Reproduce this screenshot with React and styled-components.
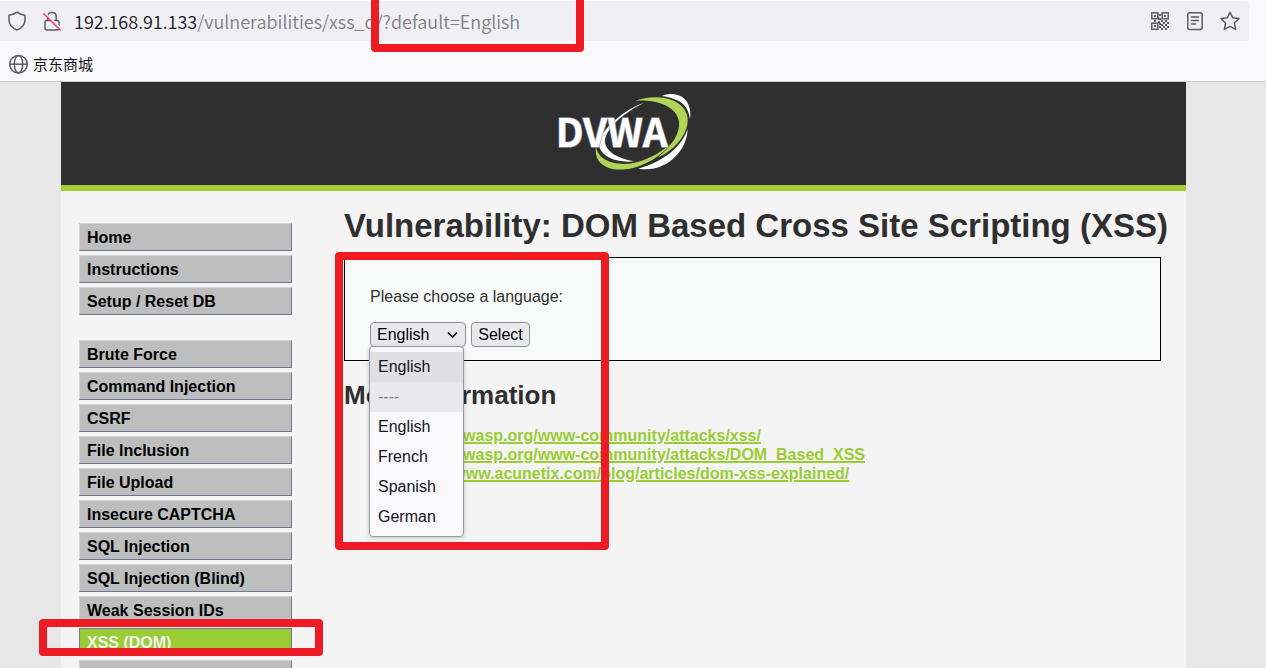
import React from "react";
import styled, { createGlobalStyle, css } from "styled-components";

const sans = `"Liberation Sans", Arial, Helvetica, sans-serif`;
const uiFont = `"Noto Sans CJK SC", "Noto Sans", sans-serif`;

const GlobalStyle = createGlobalStyle`
  *, *::before, *::after { box-sizing: border-box; }
  body { margin: 0; background: #e7e7e7; font-family: ${sans}; font-size: 16px; }
`;

const Window = styled.div`
  position: relative;
  display: flex;
  flex-direction: column;
  height: 100vh;
  overflow: hidden;
`;

const Chrome = styled.header`
  flex: none;
  background: #f9f9fb;
  border-bottom: 1px solid #cccccc;
  padding-top: 1px;
  font-family: ${uiFont};
`;

const UrlBar = styled.div`
  display: flex;
  align-items: center;
  height: 40px;
  margin-right: 17px;
  padding: 0 9px 0 7px;
  background: #f0eff4;
  border-radius: 0 4px 4px 0;
  color: #5b5b66;
`;

const IconButton = styled.button`
  display: flex;
  flex: none;
  width: 20px;
  height: 20px;
  margin-right: ${(p) => p.$after || 0}px;
  padding: 0;
  border: 0;
  background: none;
  color: inherit;
`;

const Address = styled.div`
  flex: 1;
  font-size: 18px;
  font-weight: 350;
  line-height: 24px;
  color: #7f7f85;
  white-space: nowrap;
`;

const Host = styled.span`
  color: #15141a;
`;

const Bookmarks = styled.nav`
  display: flex;
  align-items: center;
  height: 40px;
  padding: 5px 8px 0;
`;

const Bookmark = styled.a`
  display: flex;
  align-items: center;
  gap: 4px;
  color: #15141a;
  font-size: 15px;
  line-height: 20px;
  text-decoration: none;
`;

const Viewport = styled.div`
  flex: 1;
  min-height: 0;
  overflow: hidden;
  padding: 0 80px 0 61px;
`;

const Container = styled.div`
  min-height: 100%;
  background: #f4f4f4;
`;

const Banner = styled.div`
  display: flex;
  justify-content: center;
  height: 109px;
  padding-top: 12px;
  background: #2f2f2f;
  border-bottom: 6px solid #a1cc33;
`;

const Columns = styled.div`
  display: flex;
  align-items: flex-start;
`;

const Menu = styled.nav`
  flex: none;
  width: 231px;
  padding: 32px 0 0 18px;
`;

const MenuGroup = styled.ul`
  display: flex;
  flex-direction: column;
  gap: 4px;
  margin: 0 0 25px;
  padding: 0;
  list-style: none;
`;

const MenuLink = styled.a`
  display: block;
  height: 28px;
  padding: 0 7px;
  border: 1px solid;
  border-color: #d2d2d2 #6f7a92 #6f7a92 #d2d2d2;
  background: #bebebe;
  color: #000;
  font-weight: bold;
  line-height: 27px;
  text-decoration: none;
  white-space: nowrap;
  ${(p) =>
    p.$active &&
    css`
      border-color: #6f7a92;
      background: #9acc33;
      color: #f4f4f4;
    `}
`;

const Main = styled.main`
  flex: 1;
  min-width: 0;
  padding: 14px 25px 0 52px;
  color: #2f2f2f;
`;

const Title = styled.h1`
  margin: 0 0 10px;
  font-size: 33px;
  line-height: 42px;
  white-space: nowrap;
`;

const Panel = styled.form`
  height: 104px;
  padding: 29px 25px 0;
  border: 1px solid #000;
  background: #f8faf9;
`;

const FieldLabel = styled.label`
  display: block;
  margin-bottom: 16px;
  line-height: 19px;
`;

const Controls = styled.div`
  display: flex;
  gap: 5px;
`;

const SelectWrap = styled.div`
  position: relative;
  width: 96px;
  height: 25px;
`;

const control = css`
  height: 25px;
  border: 1px solid #8f8f9d;
  border-radius: 4px;
  background: #e9e9ed;
  color: #000;
  font-family: ${sans};
  font-size: 16px;
  line-height: 22px;
`;

const LanguageSelect = styled.select`
  ${control}
  appearance: none;
  width: 100%;
  padding: 0 6px;
`;

const Chevron = styled.svg`
  position: absolute;
  top: 9px;
  right: 8px;
  pointer-events: none;
`;

const SubmitButton = styled.button`
  ${control}
  width: 59px;
  padding: 0;
`;

const Options = styled.ul`
  position: absolute;
  z-index: 1;
  top: 24px;
  left: -1px;
  width: 95px;
  height: 191px;
  margin: 0;
  padding: 5px 0 0;
  border: 1px solid #9a9a9e;
  border-radius: 4px;
  background: #f9f9fb;
  box-shadow: 0 1px 4px rgba(0, 0, 0, 0.2);
  list-style: none;
`;

const Option = styled.li`
  height: 30px;
  padding: 0 8px;
  background: ${(p) => p.$bg || "transparent"};
  color: ${(p) => (p.$muted ? "#7a7a82" : "#15141a")};
  line-height: 30px;
`;

const Subtitle = styled.h2`
  margin: 19px 0 16px;
  font-size: 26px;
  line-height: 30px;
`;

const References = styled.ul`
  margin: 0;
  padding-left: 56px;
  line-height: 19px;
`;

const Reference = styled.a`
  color: #9acc33;
  font-weight: bold;
  text-decoration-thickness: 2px;
`;

const Highlight = styled.div`
  position: absolute;
  z-index: 2;
  top: ${(p) => p.$y}px;
  left: ${(p) => p.$x}px;
  width: ${(p) => p.$w}px;
  height: ${(p) => p.$h}px;
  border: 8px solid #ed1c24;
  border-radius: 4px;
  pointer-events: none;
`;

const line = {
  fill: "none",
  stroke: "currentColor",
  strokeWidth: 1.5,
  strokeLinecap: "round",
  strokeLinejoin: "round",
};

const ShieldIcon = () => (
  <svg width="20" height="20" viewBox="0 0 20 20" {...line}>
    <path d="M10 1.2 C12 2.8 15 3.8 18 4.2 V8.5 C18 13 15 17 10 19 C5 17 2 13 2 8.5 V4.2 C5 3.8 8 2.8 10 1.2 Z" />
  </svg>
);

const InsecureIcon = () => (
  <svg width="20" height="20" viewBox="0 0 20 20" {...line}>
    <path d="M5.8 9 V5.5 C5.8 0 14.2 0 14.2 5.5 V9 M5 9.5 H15 C16.3 9.5 17 10.2 17 11.5 V17 C17 18.3 16.3 19 15 19 H5 C3.7 19 3 18.3 3 17 V11.5 C3 10.2 3.7 9.5 5 9.5 Z" />
    <path d="M3 2.2 L19.5 18.2" stroke="#f0eff4" strokeWidth="2" />
    <path d="M1.8 2.8 L18.2 19" stroke="#ff3b63" />
  </svg>
);

const QrIcon = () => (
  <svg width="20" height="20" viewBox="0 0 20 20" fill="none" stroke="currentColor" strokeWidth="1.5">
    <path d="M1.8 1.8 h6 v6 h-6 Z M12.2 1.8 h6 v6 h-6 Z M1.8 12.2 h6 v6 h-6 Z" />
    <path
      fill="currentColor"
      stroke="none"
      d="M4 4h2v2H4z M14 4h2v2h-2z M4 14h2v2H4z M9 3h2v2H9z M8 5h1v2h2v2H8z M4 9h2v2H4z M8 10h2v2H8z M11 9h2v2h-2z M15 9h2v2h-2z M9 12h2v2H9z M13 11h2v2h-2z M17 11h2v2h-2z M11 13h2v2h-2z M15 13h2v2h-2z M9 15h2v2H9z M13 15h2v2h-2z M17 15h2v2h-2z M11 17h2v2h-2z M15 17h2v2h-2z"
    />
  </svg>
);

const ReaderIcon = () => (
  <svg width="20" height="20" viewBox="0 0 20 20" {...line}>
    <rect x="2.8" y="1.8" width="14.4" height="16.6" rx="2" />
    <path d="M6.5 6 H13.5 M6.5 9.5 H13.5 M6.5 13 H10.5" />
  </svg>
);

const StarIcon = () => (
  <svg width="20" height="20" viewBox="0 0 20 20" {...line}>
    <path d="M10 1.2 L12.6 6.8 L19 7.6 L14.4 12 L15.6 18.4 L10 15.3 L4.4 18.4 L5.6 12 L1 7.6 L7.4 6.8 Z" />
  </svg>
);

const GlobeIcon = () => (
  <svg width="21" height="21" viewBox="0 0 21 21" fill="none" stroke="#5b5b66" strokeWidth="1.5">
    <circle cx="10.5" cy="11.2" r="8.8" />
    <ellipse cx="10.5" cy="11.2" rx="4.2" ry="8.8" />
    <path d="M1.8 11.2 H19.2" />
  </svg>
);

const Logo = () => (
  <svg width="134" height="76" viewBox="48 30 402 228" role="img" aria-label="DVWA">
    <path fill="#fff" d="M308 57 C240 80 165 150 175 190 C185 220 230 238 280 232 C235 225 195 205 192 175 C190 140 240 90 308 57 Z" />
    <path fill="#fff" d="M362 36 C405 18 456 40 447 105 C442 66 420 44 362 36 Z" />
    <path fill="#b1d456" d="M283 50 C335 30 420 36 438 92 C450 142 405 195 352 220 C392 185 418 150 414 112 C406 68 350 46 283 50 Z" />
    <path fill="#fff" d="M440 135 C438 205 370 268 292 254 C350 238 418 200 440 135 Z" />
    <path fill="#b1d456" d="M165 190 C175 238 240 248 290 234 C330 222 365 202 392 176 C345 236 270 264 215 255 C180 248 160 226 165 190 Z" />
    <text
      x="44"
      y="188"
      fill="#fff"
      stroke="#8d90a0"
      strokeWidth="4"
      paintOrder="stroke"
      fontFamily="'Noto Sans CJK SC', 'Noto Sans', sans-serif"
      fontWeight="bold"
      fontSize="117"
    >
      DVWA
    </text>
  </svg>
);

const menuGroups = [
  ["Home", "Instructions", "Setup / Reset DB"],
  [
    "Brute Force",
    "Command Injection",
    "CSRF",
    "File Inclusion",
    "File Upload",
    "Insecure CAPTCHA",
    "SQL Injection",
    "SQL Injection (Blind)",
    "Weak Session IDs",
    "XSS (DOM)",
    "XSS (Reflected)",
  ],
];

const references = [
  "https://owasp.org/www-community/attacks/xss/",
  "https://owasp.org/www-community/attacks/DOM_Based_XSS",
  "https://www.acunetix.com/blog/articles/dom-xss-explained/",
];

export default function App() {
  return (
    <Window>
      <GlobalStyle />
      <Chrome>
        <UrlBar>
          <IconButton $after={15} aria-label="Tracking protection"><ShieldIcon /></IconButton>
          <IconButton $after={12} aria-label="Connection not secure"><InsecureIcon /></IconButton>
          <Address>
            <Host>192.168.91.133</Host>/vulnerabilities/xss_d/?default=English
          </Address>
          <IconButton $after={15} aria-label="QR code"><QrIcon /></IconButton>
          <IconButton $after={15} aria-label="Reader view"><ReaderIcon /></IconButton>
          <IconButton aria-label="Bookmark this page"><StarIcon /></IconButton>
        </UrlBar>
        <Bookmarks>
          <Bookmark href="#"><GlobeIcon />京东商城</Bookmark>
        </Bookmarks>
      </Chrome>
      <Viewport>
        <Container>
          <Banner><Logo /></Banner>
          <Columns>
            <Menu>
              {menuGroups.map((group) => (
                <MenuGroup key={group[0]}>
                  {group.map((name) => (
                    <li key={name}>
                      <MenuLink href="#" $active={name === "XSS (DOM)"}>{name}</MenuLink>
                    </li>
                  ))}
                </MenuGroup>
              ))}
            </Menu>
            <Main>
              <Title>Vulnerability: DOM Based Cross Site Scripting (XSS)</Title>
              <Panel>
                <FieldLabel htmlFor="language">Please choose a language:</FieldLabel>
                <Controls>
                  <SelectWrap>
                    <LanguageSelect id="language" defaultValue="English">
                      <option>English</option>
                      <option>French</option>
                      <option>Spanish</option>
                      <option>German</option>
                    </LanguageSelect>
                    <Chevron width="11" height="8" viewBox="0 0 11 8" fill="none" stroke="#000" strokeWidth="1.6">
                      <path d="M1 1.5 L5.5 6 L10 1.5" />
                    </Chevron>
                    <Options role="listbox" aria-label="Language">
                      <Option role="option" $bg="#e0dfe5">English</Option>
                      <Option role="option" $bg="#e9e8ed" $muted>----</Option>
                      <Option role="option">English</Option>
                      <Option role="option">French</Option>
                      <Option role="option">Spanish</Option>
                      <Option role="option">German</Option>
                    </Options>
                  </SelectWrap>
                  <SubmitButton type="button">Select</SubmitButton>
                </Controls>
              </Panel>
              <Subtitle>More Information</Subtitle>
              <References>
                {references.map((url) => (
                  <li key={url}><Reference href={url}>{url}</Reference></li>
                ))}
              </References>
            </Main>
          </Columns>
        </Container>
      </Viewport>
      <Highlight $x={371} $y={-8} $w={213} $h={60} />
      <Highlight $x={335} $y={252} $w={274} $h={298} />
      <Highlight $x={39} $y={619} $w={284} $h={37} />
    </Window>
  );
}
